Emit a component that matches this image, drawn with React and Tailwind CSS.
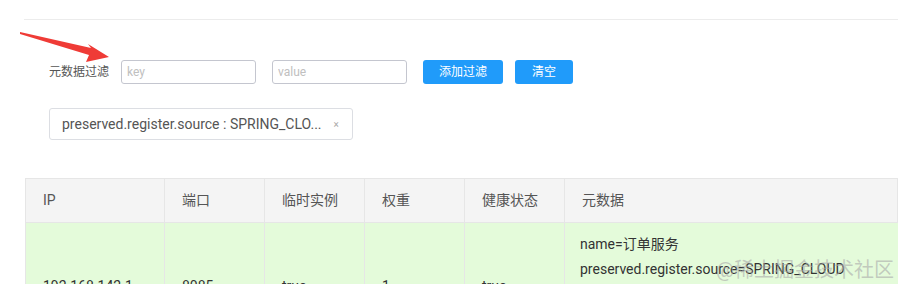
const columns = [
  { label: 'IP', w: 'w-[139px]' },
  { label: '端口', w: 'w-[100px]' },
  { label: '临时实例', w: 'w-[100px]' },
  { label: '权重', w: 'w-[100px]' },
  { label: '健康状态', w: 'w-[100px]' },
  { label: '元数据', w: 'flex-1' },
]

const row = ['192.168.142.1', '8085', 'true', '1', 'true']
const metadata = [
  'name=订单服务',
  'preserved.register.source=SPRING_CLOUD',
  'version=1.0',
  'env=dev',
]

function Arrow() {
  return (
    <svg className="absolute left-0 top-0" width="120" height="70" viewBox="0 0 120 70">
      <polygon points="20,32 91,48 88,44 109,57 86,62 89,55 20,34" fill="#ef3b36" />
    </svg>
  )
}

export default function App() {
  return (
    <div className="relative h-[284px] w-[898px] overflow-hidden bg-white font-['Roboto','Noto_Sans_CJK_SC',sans-serif] text-[#333]">
      <Arrow />
      <div className="ml-[24px] mt-[19px] border-t border-[#ececec]" />

      <div className="ml-[49px] mt-[40px] flex items-center text-[12px]">
        <span className="w-[72px] text-[#555]">元数据过滤</span>
        <input
          className="h-[24px] w-[135px] rounded-[3px] border border-[#c4c6cf] px-[5px] text-[12px] outline-none placeholder:text-[#c0c0c0]"
          placeholder="key"
        />
        <input
          className="ml-[16px] h-[24px] w-[135px] rounded-[3px] border border-[#c4c6cf] px-[5px] text-[12px] outline-none placeholder:text-[#c0c0c0]"
          placeholder="value"
        />
        <button className="ml-[16px] h-[24px] w-[80px] rounded-[3px] bg-[#209bfa] text-white">添加过滤</button>
        <button className="ml-[12px] h-[24px] w-[58px] rounded-[3px] bg-[#209bfa] text-white">清空</button>
      </div>

      <div className="ml-[49px] mt-[24px] flex h-[32px] w-[304px] items-center rounded-[3px] border border-[#dcdee3] pl-[12px] text-[14px] text-[#555]">
        <span>preserved.register.source : SPRING_CLO...</span>
        <span className="ml-[12px] text-[10px] text-[#aaa]">×</span>
      </div>

      <div className="ml-[25px] mt-[38px] border-l border-t border-[#e6e6e6] text-[14px]">
        <div className="flex h-[43px] bg-[#f4f4f4]">
          {columns.map((c) => (
            <div key={c.label} className={`${c.w} flex items-center border-r border-[#e6e6e6] pl-[17px] text-[#555]`}>
              {c.label}
            </div>
          ))}
        </div>
        <div className="flex bg-[#e4fbda] border-t border-[#e6e6e6]">
          {row.map((v, i) => (
            <div key={i} className={`${columns[i].w} flex items-center border-r border-[#e6e6e6] pl-[17px]`}>
              {v}
            </div>
          ))}
          <div className="flex-1 pl-[15px] pt-[9px] pb-[17px] leading-[25px]">
            {metadata.map((m) => (
              <div key={m}>{m}</div>
            ))}
          </div>
        </div>
      </div>

      <div className="absolute left-[716px] top-[255px] text-[20px] text-[#aaa]/60">@稀土掘金技术社区</div>
    </div>
  )
}
